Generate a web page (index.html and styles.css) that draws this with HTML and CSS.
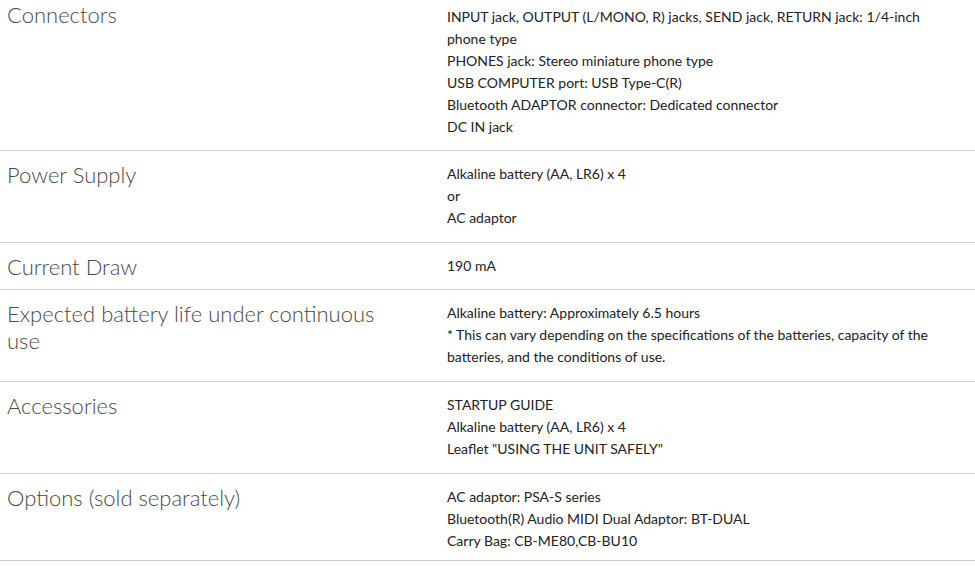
FILE: index.html
```html
<!DOCTYPE html>
<html lang="en">
<head>
<meta charset="utf-8">
<title>Specifications</title>
<link rel="stylesheet" href="styles.css">
</head>
<body>
<div class="specs">
  <div class="row first">
    <div class="label">Connectors</div>
    <div class="value">
      <p>INPUT jack, OUTPUT (L/MONO, R) jacks, SEND jack, RETURN jack: 1/4-inch phone type</p>
      <p>PHONES jack: Stereo miniature phone type</p>
      <p>USB COMPUTER port: USB Type-C(R)</p>
      <p>Bluetooth ADAPTOR connector: Dedicated connector</p>
      <p>DC IN jack</p>
    </div>
  </div>
  <div class="row">
    <div class="label">Power Supply</div>
    <div class="value">
      <p>Alkaline battery (AA, LR6) x 4</p>
      <p>or</p>
      <p>AC adaptor</p>
    </div>
  </div>
  <div class="row single">
    <div class="label">Current Draw</div>
    <div class="value">
      <p>190 mA</p>
    </div>
  </div>
  <div class="row">
    <div class="label">Expected battery life under continuous use</div>
    <div class="value">
      <p>Alkaline battery: Approximately 6.5 hours</p>
      <p>* This can vary depending on the specifications of the batteries, capacity of the batteries, and the conditions of use.</p>
    </div>
  </div>
  <div class="row">
    <div class="label">Accessories</div>
    <div class="value">
      <p>STARTUP GUIDE</p>
      <p>Alkaline battery (AA, LR6) x 4</p>
      <p>Leaflet "USING THE UNIT SAFELY"</p>
    </div>
  </div>
  <div class="row last">
    <div class="label">Options (sold separately)</div>
    <div class="value">
      <p>AC adaptor: PSA-S series</p>
      <p>Bluetooth(R) Audio MIDI Dual Adaptor: BT-DUAL</p>
      <p>Carry Bag: CB-ME80,CB-BU10</p>
    </div>
  </div>
</div>
</body>
</html>
```
FILE: styles.css
```css
html, body {
  margin: 0;
  padding: 0;
  background: #fff;
}
body {
  font-family: Lato, "Open Sans", "Liberation Sans", sans-serif;
  color: #333;
}
.specs {
  width: 975px;
}
.row {
  display: grid;
  grid-template-columns: 440px 1fr;
  padding: 12px 0 13px;
  border-bottom: 1px solid #cfcfcf;
}
.row.first {
  padding-top: 6px;
  padding-bottom: 12px;
}
.row.single {
  padding-bottom: 12px;
}
.row.last {
  padding-bottom: 8px;
}
.label {
  padding: 0 42px 0 7px;
  font-size: 22px;
  font-weight: 300;
  line-height: 27px;
  color: #4a4a4a;
  margin-top: -2px;
  margin-bottom: -5px;
}
.row.first .label {
  margin-top: -5px;
}
.value {
  padding: 0 14px 0 7px;
  font-size: 14px;
  line-height: 22px;
  color: #222;
}
.value p {
  margin: 0;
}
```
